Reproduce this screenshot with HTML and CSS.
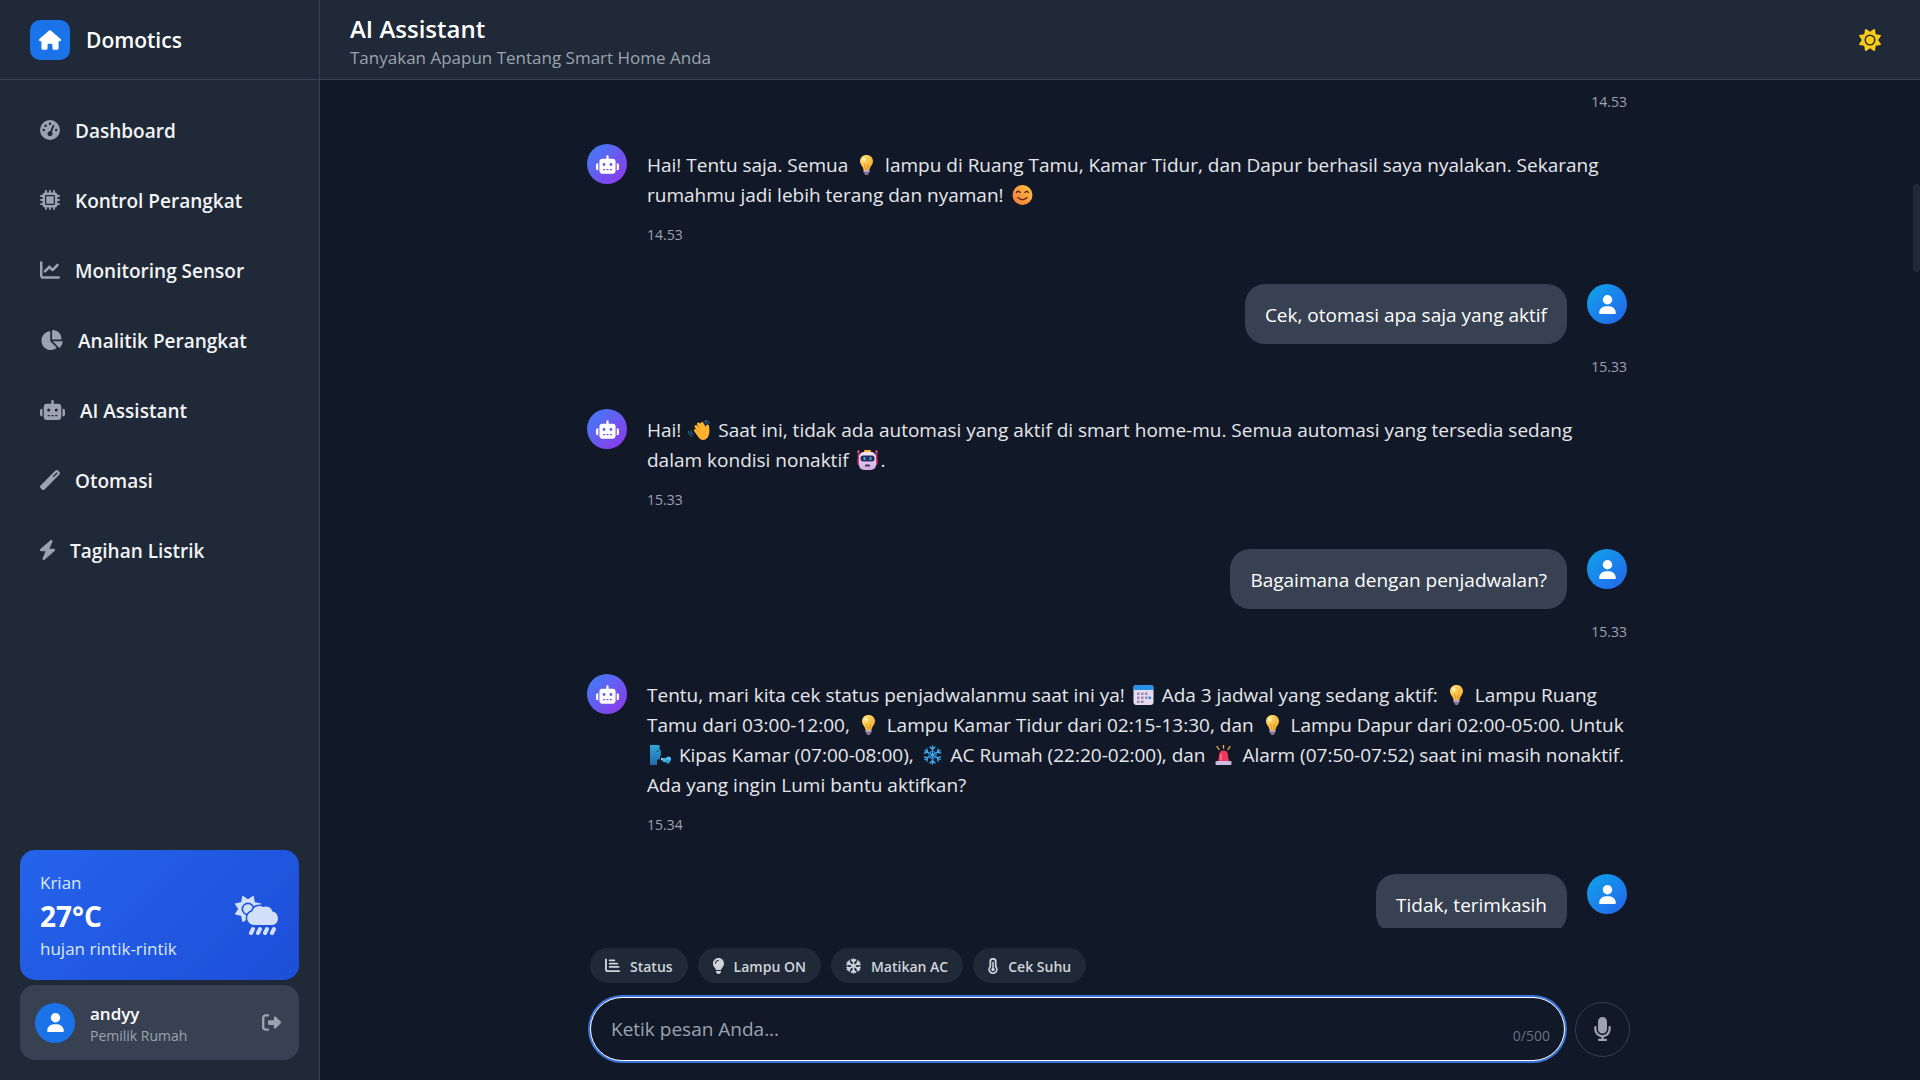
FILE: index.html
```html
<!DOCTYPE html>
<html lang="id">
<head>
  <meta charset="UTF-8">
  <meta name="viewport" content="width=device-width, initial-scale=1.0">
  <title>Domotics - AI Assistant</title>
  <link rel="stylesheet" href="styles.css">
</head>
<body>
  <!-- Icon sprite -->
  <svg class="sprite" aria-hidden="true">
    <defs>
      <linearGradient id="bulb-fill" x1="0" y1="0" x2="1" y2="1">
        <stop offset="0" stop-color="#ffe37a"/>
        <stop offset="1" stop-color="#f5a623"/>
      </linearGradient>
      <linearGradient id="face-fill" x1="1" y1="0" x2="0" y2="1">
        <stop offset="0" stop-color="#ffc83d"/>
        <stop offset="1" stop-color="#f5743e"/>
      </linearGradient>
      <linearGradient id="robot-fill" x1="0" y1="0" x2="0" y2="1">
        <stop offset="0" stop-color="#f3e6ff"/>
        <stop offset="1" stop-color="#cfa9e0"/>
      </linearGradient>
      <linearGradient id="wind-fill" x1="0" y1="0" x2="0" y2="1">
        <stop offset="0" stop-color="#2fa8dc"/>
        <stop offset="1" stop-color="#2566a8"/>
      </linearGradient>
      <mask id="sun-mask">
        <rect x="0" y="0" width="44" height="40" fill="#fff"/>
        <path d="M19 29a7 7 0 0 1-1.500-13.800A7 7 0 0 1 28 11a7 7 0 0 1 9.500 4.500A7 7 0 0 1 38 29z" fill="#000" stroke="#000" stroke-width="3"/>
        <rect x="11" y="24" width="33" height="16" fill="#000"/>
      </mask>
    </defs>
    <symbol id="i-user" viewBox="0 0 448 512"><path d="M224 256A128 128 0 1 0 224 0a128 128 0 1 0 0 256zm-45.700 48C79.800 304 0 383.800 0 482.300C0 498.700 13.300 512 29.700 512H418.300c16.400 0 29.700-13.300 29.700-29.700C448 383.800 368.200 304 269.700 304H178.300z"/></symbol>
    <symbol id="i-robot" viewBox="0 0 640 512"><path d="M320 0c17.700 0 32 14.300 32 32V96H472c39.800 0 72 32.200 72 72V440c0 39.800-32.200 72-72 72H168c-39.800 0-72-32.200-72-72V168c0-39.800 32.200-72 72-72H288V32c0-17.700 14.300-32 32-32zM208 384c-8.800 0-16 7.200-16 16s7.200 16 16 16h32c8.800 0 16-7.200 16-16s-7.200-16-16-16H208zm96 0c-8.800 0-16 7.200-16 16s7.200 16 16 16h32c8.800 0 16-7.200 16-16s-7.200-16-16-16H304zm96 0c-8.800 0-16 7.200-16 16s7.200 16 16 16h32c8.800 0 16-7.200 16-16s-7.200-16-16-16H400zM264 256a40 40 0 1 0 -80 0 40 40 0 1 0 80 0zm152 40a40 40 0 1 0 0-80 40 40 0 1 0 0 80zM48 224H64V416H48c-26.500 0-48-21.500-48-48V272c0-26.500 21.500-48 48-48zm544 0c26.500 0 48 21.500 48 48v96c0 26.500-21.500 48-48 48H576V224h16z"/></symbol>
    <symbol id="i-sun" viewBox="0 0 512 512"><path d="M361.500 1.200c5 2.100 8.600 6.600 9.600 11.900L391 121l107.900 19.800c5.300 1 9.800 4.600 11.900 9.600s1.500 10.700-1.600 15.200L446.900 256l62.300 90.300c3.100 4.500 3.700 10.200 1.600 15.200s-6.600 8.600-11.900 9.600L391 391 371.100 498.900c-1 5.300-4.600 9.800-9.600 11.900s-10.700 1.500-15.200-1.600L256 446.900l-90.300 62.300c-4.500 3.100-10.200 3.700-15.200 1.600s-8.600-6.600-9.600-11.900L121 391 13.100 371.100c-5.300-1-9.800-4.600-11.900-9.600s-1.500-10.700 1.600-15.200L65.100 256 2.800 165.700c-3.100-4.500-3.700-10.200-1.600-15.200s6.600-8.600 11.900-9.600L121 121 140.900 13.100c1-5.300 4.600-9.800 9.600-11.900s10.700-1.500 15.200 1.600L256 65.100 346.300 2.800c4.500-3.100 10.200-3.700 15.200-1.600zM160 256a96 96 0 1 1 192 0 96 96 0 1 1 -192 0zm224 0a128 128 0 1 0 -256 0 128 128 0 1 0 256 0z"/></symbol>

    <!-- Emoji -->
    <symbol id="e-bulb" viewBox="0 0 27 20">
      <path d="M13.500 0C9.700 0 7 2.700 7 6.300c0 2.700 1.700 4.200 2.700 6 .5.900.6 1.700.8 2.700h6c.2-1 .3-1.800.8-2.700 1-1.800 2.700-3.300 2.700-6C20 2.700 17.300 0 13.500 0z" fill="url(#bulb-fill)"/>
      <ellipse cx="11" cy="4.500" rx="1.500" ry="2.500" fill="#fff3b8"/>
      <path d="M12.500 14l-1-5M14.500 14l1-5" stroke="#d98a1c" stroke-width=".8"/>
      <path d="M10.500 15h6v2.500h-6z" fill="#b9a6c4"/>
      <path d="M11.500 17.500h4v1a2 1.500 0 0 1-4 0z" fill="#8d7a9c"/>
    </symbol>
    <symbol id="e-smile" viewBox="0 0 27 20">
      <circle cx="13.500" cy="10" r="10" fill="url(#face-fill)"/>
      <path d="M7.500 7.500q1.800-2.500 3.600 0M15.900 7.500q1.800-2.500 3.600 0M9 12.500q4.500 4.500 9 0" fill="none" stroke="#5b2b22" stroke-width="1.400" stroke-linecap="round"/>
    </symbol>
    <symbol id="e-wave" viewBox="0 0 27 20">
      <g stroke="#ffb82e" stroke-width="3" stroke-linecap="round">
        <path d="M16 13L10 6.500M17.500 10.500L12.500 4M20 10L16 3.500M12.500 14L9.500 10.500M21.500 11.500V6"/>
      </g>
      <path d="M11 12l9-4 3-1.500c.6 3 .8 6.500-.5 9.500-2 4.500-7 5-9.500 2L9.500 13z" fill="#ffb02e"/>
      <path d="M5 10.500q-.5 3 2.500 4M2.500 11q0 4 3.500 5.500M17.500 1.500q3 .2 4 3M19 0q3.500.8 4.500 3.500" fill="none" stroke="#2b7ea8" stroke-width="1"/>
    </symbol>
    <symbol id="e-robot" viewBox="0 0 27 20">
      <path d="M4.500 1v12M22.500 1v12" stroke="#d6336c" stroke-width="1.500"/>
      <circle cx="4.500" cy="1.500" r="1.200" fill="#f2548a"/><circle cx="22.500" cy="1.500" r="1.200" fill="#f2548a"/>
      <rect x="3.500" y="9" width="3" height="6" rx="1.200" fill="#e0306e"/><rect x="20.500" y="9" width="3" height="6" rx="1.200" fill="#e0306e"/>
      <rect x="10" y="0" width="7" height="4" rx="1" fill="#f5b82e"/>
      <rect x="5" y="2" width="17" height="18" rx="5" fill="url(#robot-fill)"/>
      <rect x="6.500" y="5.500" width="14" height="6" rx="2.500" fill="#2d2b57"/>
      <path d="M10.500 7v3M16.500 7v3" stroke="#37b6f2" stroke-width="1.800"/>
      <rect x="11" y="14.500" width="5" height="2" rx=".6" fill="#43364f"/>
    </symbol>
    <symbol id="e-calendar" viewBox="0 0 27 20">
      <rect x="3.500" y="0" width="20" height="20" rx="3" fill="#e6dcf2"/>
      <path d="M3.500 5V3a3 3 0 0 1 3-3h14a3 3 0 0 1 3 3v2z" fill="#2a8fe6"/>
      <g fill="#9a89b0">
        <path d="M7 7.500h2.500V10H7zM11 7.500h2.500V10H11zM15 7.500h2.500V10H15zM7 11.500h2.500V14H7zM11 11.500h2.500V14H11zM15 11.500h2.500V14H15zM7 15.500h2.500V18H7zM11 15.500h2.500V18H11z"/>
      </g>
      <path d="M18.500 11.500H21V14h-2.500z" fill="#2a8fe6"/>
    </symbol>
    <symbol id="e-wind" viewBox="0 0 27 20">
      <path d="M3 0h9.500v4l2 3-1 1 1 2-1.500 1v3l-3 1v5H3z" fill="url(#wind-fill)"/>
      <path d="M9.500 6.500q1.500-1 2.500 0" stroke="#0f4d80" fill="none"/>
      <circle cx="17.500" cy="15" r="2.200" fill="#3fb2e8"/><circle cx="21.500" cy="14" r="2.500" fill="#4fc3f0"/><circle cx="21" cy="16.500" r="2" fill="#2f9fd8"/>
      <path d="M14 12.500l3 1.500-3 1.500z" fill="#8fdcf7"/>
    </symbol>
    <symbol id="e-snow" viewBox="0 0 27 20">
      <g fill="none" stroke="#3fb0f0" stroke-width="1.300" stroke-linecap="round">
        <path d="M13.500 1v18M11 2l2.500 2.500L16 2M11 18l2.500-2.500L16 18"/>
        <path d="M13.500 1v18M11 2l2.500 2.500L16 2M11 18l2.500-2.500L16 18" transform="rotate(60 13.500 10)"/>
        <path d="M13.500 1v18M11 2l2.500 2.500L16 2M11 18l2.500-2.500L16 18" transform="rotate(120 13.500 10)"/>
      </g>
      <path d="M13.500 6l3.500 2v4l-3.500 2-3.500-2V8z" fill="none" stroke="#2b86d9" stroke-width="1.200"/>
    </symbol>
    <symbol id="e-alarm" viewBox="0 0 27 20">
      <path d="M13.500 0v3M7 1.500l2 3M20 1.500l-2 3" stroke="#f6b93b" stroke-width="1.300" stroke-linecap="round"/>
      <path d="M8 17l1.200-8a4.400 4.400 0 0 1 8.600 0l1.200 8z" fill="#f0385a"/>
      <path d="M11 9v6" stroke="#ff8aa0" stroke-width="1.200"/>
      <rect x="5.500" y="16" width="16" height="4" rx="1" fill="#cdbce0"/>
    </symbol>
  </svg>

  <div class="layout">
    <aside class="sidebar">
      <div class="brand">
        <span class="brand-logo">
          <svg width="22" height="20" viewBox="0 0 576 512"><path d="M575.800 255.500c0 18-15 32.100-32 32.100h-32l.7 160.200V472c0 22.100-17.900 40-40 40H392c-22.100 0-40-17.900-40-40V384c0-17.700-14.300-32-32-32H256c-17.700 0-32 14.300-32 32v88c0 22.100-17.900 40-40 40H104c-22.100 0-40-17.900-40-40V287.600H32c-18 0-32-14-32-32.100c0-9 3-17 10-24L266.400 8c7-7 15-8 22-8s15 2 21 7L564.800 231.500c8 7 12 15 11 24z"/></svg>
        </span>
        <span class="brand-name">Domotics</span>
      </div>

      <nav class="nav">
        <a href="#">
          <svg width="20" height="20" viewBox="0 0 512 512"><path d="M0 256a256 256 0 1 1 512 0A256 256 0 1 1 0 256zM288 96a32 32 0 1 0 -64 0 32 32 0 1 0 64 0zM256 416c35.300 0 64-28.700 64-64c0-17.400-6.900-33.100-18.100-44.600L366 161.700c5.300-12.100-.2-26.300-12.300-31.600s-26.300 .2-31.600 12.300L257.900 288c-.6 0-1.300 0-1.900 0c-35.300 0-64 28.700-64 64s28.700 64 64 64zM176 144a32 32 0 1 0 -64 0 32 32 0 1 0 64 0zM96 288a32 32 0 1 0 0-64 32 32 0 1 0 0 64zm352-32a32 32 0 1 0 -64 0 32 32 0 1 0 64 0z"/></svg>
          <span>Dashboard</span>
        </a>
        <a href="#">
          <svg width="20" height="20" viewBox="0 0 512 512"><path fill-rule="evenodd" d="M176 24c0-13.300-10.700-24-24-24s-24 10.700-24 24V64c-35.300 0-64 28.700-64 64H24c-13.300 0-24 10.700-24 24s10.700 24 24 24H64v56H24c-13.300 0-24 10.700-24 24s10.700 24 24 24H64v56H24c-13.300 0-24 10.700-24 24s10.700 24 24 24H64c0 35.300 28.700 64 64 64v40c0 13.300 10.700 24 24 24s24-10.700 24-24V448h56v40c0 13.300 10.700 24 24 24s24-10.700 24-24V448h56v40c0 13.300 10.700 24 24 24s24-10.700 24-24V448c35.300 0 64-28.700 64-64h40c13.300 0 24-10.700 24-24s-10.700-24-24-24H448V280h40c13.300 0 24-10.700 24-24s-10.700-24-24-24H448V176h40c13.300 0 24-10.700 24-24s-10.700-24-24-24H448c0-35.300-28.700-64-64-64V24c0-13.300-10.700-24-24-24s-24 10.700-24 24V64H280V24c0-13.300-10.700-24-24-24s-24 10.700-24 24V64H176V24zM160 128H352c17.700 0 32 14.300 32 32V352c0 17.700-14.300 32-32 32H160c-17.700 0-32-14.300-32-32V160c0-17.700 14.300-32 32-32zm192 32H160V352H352V160z"/></svg>
          <span>Kontrol Perangkat</span>
        </a>
        <a href="#">
          <svg width="20" height="20" viewBox="0 0 512 512"><path d="M64 64c0-17.700-14.300-32-32-32S0 46.300 0 64V400c0 44.200 35.800 80 80 80H480c17.700 0 32-14.300 32-32s-14.300-32-32-32H80c-8.800 0-16-7.200-16-16V64zm406.600 86.600c12.500-12.500 12.500-32.800 0-45.300s-32.800-12.500-45.300 0L320 210.700l-57.400-57.400c-12.500-12.500-32.800-12.500-45.300 0l-112 112c-12.500 12.500-12.500 32.800 0 45.300s32.800 12.500 45.300 0L240 221.300l57.400 57.400c12.500 12.500 32.800 12.500 45.300 0l128-128z"/></svg>
          <span>Monitoring Sensor</span>
        </a>
        <a href="#">
          <svg width="23" height="20" viewBox="0 0 576 512"><path d="M304 240V16.600c0-9 7-16.600 16-16.600C443.700 0 544 100.300 544 224c0 9-7.600 16-16.600 16H304zM32 272C32 150.700 122.100 50.300 239 34.300c9.200-1.300 17 6.100 17 15.400V288L412.500 444.500c6.700 6.700 6.200 17.700-1.500 23.100C371.800 495.600 323.800 512 272 512C139.500 512 32 404.600 32 272zm526.400 16c9.300 0 16.600 7.800 15.400 17c-7.700 55.900-34.600 105.600-73.900 142.300c-6 5.600-15.400 5.200-21.200-.7L320 288H558.400z"/></svg>
          <span>Analitik Perangkat</span>
        </a>
        <a href="#" aria-current="page">
          <svg width="25" height="20"><use href="#i-robot"/></svg>
          <span>AI Assistant</span>
        </a>
        <a href="#">
          <svg width="20" height="20" viewBox="0 0 512 512"><path d="M14.100 463.300c-18.700-18.700-18.700-49.100 0-67.900L395.400 14.100c18.700-18.700 49.100-18.700 67.900 0l34.600 34.600c18.700 18.700 18.700 49.100 0 67.900L116.500 497.900c-18.700 18.700-49.100 18.700-67.900 0L14.100 463.300zM347.600 187.600l105-105L429.400 59.300l-105 105 23.300 23.300z" fill-rule="evenodd"/></svg>
          <span>Otomasi</span>
        </a>
        <a href="#">
          <svg width="15" height="20" viewBox="32 0 384 512"><path d="M349.400 44.600c5.900-13.700 1.500-29.700-10.600-38.500s-28.600-8-39.900 1.800l-256 224c-10 8.800-13.600 22.900-8.900 35.300S50.700 288 64 288H175.500L98.600 467.400c-5.900 13.700-1.500 29.700 10.600 38.500s28.600 8 39.900-1.800l256-224c10-8.800 13.600-22.900 8.900-35.300s-16.600-20.700-30-20.700H272.500L349.400 44.600z"/></svg>
          <span>Tagihan Listrik</span>
        </a>
      </nav>

      <div class="sidebar-bottom">
        <div class="weather">
          <div>
            <div class="weather-text">Krian</div>
            <div class="weather-temp">27°C</div>
            <div class="weather-text">hujan rintik-rintik</div>
          </div>
          <svg class="weather-icon" width="44" height="40" viewBox="0 0 44 40">
            <g mask="url(#sun-mask)"><use href="#i-sun" width="26" height="26"/></g>
            <path d="M19 29a7 7 0 0 1-1.500-13.800A7 7 0 0 1 28 11a7 7 0 0 1 9.500 4.500A7 7 0 0 1 38 29z"/>
            <path d="M18 33l-2 4M25 33l-2 4M32 33l-2 4M39 33l-2 4" stroke="currentColor" stroke-width="4" stroke-linecap="round"/>
          </svg>
        </div>
        <div class="profile">
          <span class="avatar avatar-blue"><svg width="17" height="19"><use href="#i-user"/></svg></span>
          <div class="profile-info">
            <div class="profile-name">andyy</div>
            <div class="profile-role">Pemilik Rumah</div>
          </div>
          <button type="button" class="logout" aria-label="Keluar">
            <svg width="19" height="19" viewBox="0 0 512 512"><path d="M377.900 105.900L500.700 228.700c7.200 7.200 11.300 17.100 11.300 27.300s-4.100 20.100-11.300 27.300L377.900 406.100c-6.400 6.400-15 9.900-24 9.900c-18.700 0-33.900-15.200-33.900-33.900l0-62.100-128 0c-17.700 0-32-14.300-32-32l0-64c0-17.700 14.300-32 32-32l128 0 0-62.100c0-18.700 15.200-33.900 33.900-33.900c9 0 17.600 3.600 24 9.900zM160 96L96 96c-17.700 0-32 14.300-32 32l0 256c0 17.700 14.300 32 32 32l64 0c17.700 0 32 14.300 32 32s-14.300 32-32 32l-64 0c-53 0-96-43-96-96L0 128C0 75 43 32 96 32l64 0c17.700 0 32 14.300 32 32s-14.300 32-32 32z"/></svg>
          </button>
        </div>
      </div>
    </aside>

    <main class="main">
      <header class="topbar">
        <div class="topbar-title">
          <h1>AI Assistant</h1>
          <p>Tanyakan Apapun Tentang Smart Home Anda</p>
        </div>
        <button type="button" class="theme-toggle" aria-label="Ganti tema">
          <svg width="22" height="22"><use href="#i-sun"/></svg>
        </button>
      </header>

      <section class="chat">
        <div class="chat-inner">
          <div class="message user">
            <time>14.53</time>
          </div>

          <div class="message bot">
            <span class="avatar avatar-bot"><svg width="23" height="19"><use href="#i-robot"/></svg></span>
            <div class="message-body">
              <p>Hai! Tentu saja. Semua <svg class="emoji" role="img" aria-label="💡"><use href="#e-bulb"/></svg> lampu di Ruang Tamu, Kamar Tidur, dan Dapur berhasil saya nyalakan. Sekarang<br>rumahmu jadi lebih terang dan nyaman! <svg class="emoji" role="img" aria-label="😊"><use href="#e-smile"/></svg></p>
              <time>14.53</time>
            </div>
          </div>

          <div class="message user">
            <div class="message-row">
              <p class="bubble">Cek, otomasi apa saja yang aktif</p>
              <span class="avatar avatar-user"><svg width="17" height="19"><use href="#i-user"/></svg></span>
            </div>
            <time>15.33</time>
          </div>

          <div class="message bot">
            <span class="avatar avatar-bot"><svg width="23" height="19"><use href="#i-robot"/></svg></span>
            <div class="message-body">
              <p>Hai! <svg class="emoji" role="img" aria-label="👋"><use href="#e-wave"/></svg> Saat ini, tidak ada automasi yang aktif di smart home-mu. Semua automasi yang tersedia sedang<br>dalam kondisi nonaktif <svg class="emoji" role="img" aria-label="🤖"><use href="#e-robot"/></svg>.</p>
              <time>15.33</time>
            </div>
          </div>

          <div class="message user">
            <div class="message-row">
              <p class="bubble">Bagaimana dengan penjadwalan?</p>
              <span class="avatar avatar-user"><svg width="17" height="19"><use href="#i-user"/></svg></span>
            </div>
            <time>15.33</time>
          </div>

          <div class="message bot">
            <span class="avatar avatar-bot"><svg width="23" height="19"><use href="#i-robot"/></svg></span>
            <div class="message-body">
              <p>Tentu, mari kita cek status penjadwalanmu saat ini ya! <svg class="emoji" role="img" aria-label="📅"><use href="#e-calendar"/></svg> Ada 3 jadwal yang sedang aktif: <svg class="emoji" role="img" aria-label="💡"><use href="#e-bulb"/></svg> Lampu Ruang<br>Tamu dari 03:00-12:00, <svg class="emoji" role="img" aria-label="💡"><use href="#e-bulb"/></svg> Lampu Kamar Tidur dari 02:15-13:30, dan <svg class="emoji" role="img" aria-label="💡"><use href="#e-bulb"/></svg> Lampu Dapur dari 02:00-05:00. Untuk<br><svg class="emoji" role="img" aria-label="🌬️"><use href="#e-wind"/></svg> Kipas Kamar (07:00-08:00), <svg class="emoji" role="img" aria-label="❄️"><use href="#e-snow"/></svg> AC Rumah (22:20-02:00), dan <svg class="emoji" role="img" aria-label="🚨"><use href="#e-alarm"/></svg> Alarm (07:50-07:52) saat ini masih nonaktif.<br>Ada yang ingin Lumi bantu aktifkan?</p>
              <time>15.34</time>
            </div>
          </div>

          <div class="message user">
            <div class="message-row">
              <p class="bubble">Tidak, terimkasih</p>
              <span class="avatar avatar-user"><svg width="17" height="19"><use href="#i-user"/></svg></span>
            </div>
          </div>
        </div>
        <div class="scroll-thumb"></div>
      </section>

      <footer class="composer">
        <div class="composer-inner">
          <div class="chips">
            <button type="button" class="chip">
              <svg width="15" height="15" viewBox="0 0 16 16"><path d="M1 1.500V12a2 2 0 0 0 2 2h12M5 2.500h5M5 6h8M5 9.500h9.500" fill="none" stroke="currentColor" stroke-width="2" stroke-linecap="round"/></svg>
              <span>Status</span>
            </button>
            <button type="button" class="chip">
              <svg width="11" height="16" viewBox="16 0 352 512"><path d="M272 384c9.600-31.900 29.500-59.100 49.200-86.200c5.200-7.100 10.400-14.200 15.400-21.400c19.800-28.500 31.400-63 31.400-100.300C368 78.800 289.200 0 192 0S16 78.800 16 176c0 37.300 11.600 71.900 31.400 100.300c5 7.200 10.200 14.300 15.400 21.400c19.800 27.100 39.700 54.400 49.200 86.200H272zM192 512c44.200 0 80-35.800 80-80V416H112v16c0 44.200 35.800 80 80 80zM112 176c0 8.800-7.200 16-16 16s-16-7.200-16-16c0-61.900 50.100-112 112-112c8.800 0 16 7.200 16 16s-7.200 16-16 16c-44.200 0-80 35.800-80 80z"/></svg>
              <span>Lampu ON</span>
            </button>
            <button type="button" class="chip">
              <svg width="15" height="16" viewBox="0 0 15 16">
                <g fill="none" stroke="currentColor" stroke-width="1.700" stroke-linecap="round">
                  <path d="M7.500 1v14M5.500 1.800l2 2 2-2M5.500 14.200l2-2 2 2"/>
                  <path d="M7.500 1v14M5.500 1.800l2 2 2-2M5.500 14.200l2-2 2 2" transform="rotate(60 7.500 8)"/>
                  <path d="M7.500 1v14M5.500 1.800l2 2 2-2M5.500 14.200l2-2 2 2" transform="rotate(120 7.500 8)"/>
                </g>
              </svg>
              <span>Matikan AC</span>
            </button>
            <button type="button" class="chip">
              <svg width="10" height="16" viewBox="0 0 10 16"><path d="M2.300 3.500a2.700 2.700 0 0 1 5.400 0v5.200a3.800 3.800 0 1 1-5.400 0z" fill="none" stroke="currentColor" stroke-width="1.800"/><path d="M5 4.500v6" stroke="currentColor" stroke-width="1.500" stroke-linecap="round"/><circle cx="5" cy="11.500" r="1.700"/></svg>
              <span>Cek Suhu</span>
            </button>
          </div>
          <form class="input-row">
            <div class="input-wrap">
              <input type="text" placeholder="Ketik pesan Anda..." maxlength="500" aria-label="Ketik pesan Anda">
              <span class="counter">0/500</span>
            </div>
            <button type="button" class="mic" aria-label="Rekam suara">
              <svg width="17" height="24" viewBox="16 0 352 512"><path d="M192 0C139 0 96 43 96 96V256c0 53 43 96 96 96s96-43 96-96V96c0-53-43-96-96-96zM64 216c0-13.300-10.700-24-24-24s-24 10.700-24 24v40c0 89.100 66.200 162.700 152 174.400V464H120c-13.300 0-24 10.700-24 24s10.700 24 24 24h144c13.300 0 24-10.700 24-24s-10.700-24-24-24H216V430.400c85.800-11.700 152-85.300 152-174.400V216c0-13.300-10.700-24-24-24s-24 10.700-24 24v40c0 70.700-57.300 128-128 128s-128-57.300-128-128V216z"/></svg>
            </button>
          </form>
        </div>
      </footer>
    </main>
  </div>
</body>
</html>
```
FILE: styles.css
```css
* {
  box-sizing: border-box;
}

body {
  margin: 0;
  font-family: 'Open Sans', 'Noto Sans', sans-serif;
  font-size: 19px;
  line-height: 30px;
  color: #e5e7eb;
  background-color: #111827;
}

h1, p {
  margin: 0;
}

button, input {
  font-family: inherit;
}

button {
  padding: 0;
  border: none;
  background: none;
  cursor: pointer;
}

svg {
  fill: currentColor;
  flex-shrink: 0;
}

.sprite {
  position: absolute;
  width: 0;
  height: 0;
}

.layout {
  display: flex;
  height: 100vh;
}

/* Sidebar */
.sidebar {
  display: flex;
  flex-direction: column;
  flex: 0 0 320px;
  background-color: #1f2937;
  border-right: 1px solid #374151;
}

.brand {
  display: flex;
  align-items: center;
  gap: 16px;
  height: 80px;
  padding: 0 30px;
  border-bottom: 1px solid #374151;
}

.brand-logo {
  display: flex;
  align-items: center;
  justify-content: center;
  width: 40px;
  height: 40px;
  border-radius: 10px;
  background-color: #1a73e8;
  color: #fff;
}

.brand-name {
  font-size: 21px;
  font-weight: 600;
  color: #fff;
}

.nav {
  display: flex;
  flex-direction: column;
  gap: 10px;
  padding: 20px;
}

.nav a {
  display: flex;
  align-items: center;
  gap: 15px;
  height: 60px;
  padding: 0 20px;
  color: #f3f4f6;
  font-weight: 600;
  text-decoration: none;
}

.nav span {
  padding-top: 2px;
}

.nav svg {
  color: #9ca3af;
}

.sidebar-bottom {
  display: flex;
  flex-direction: column;
  gap: 5px;
  margin-top: auto;
  padding: 20px;
}

.weather {
  display: flex;
  align-items: center;
  justify-content: space-between;
  height: 130px;
  padding: 2px 20px 0;
  border-radius: 15px;
  background: linear-gradient(135deg, #2563eb, #1d4ed8);
  color: #fff;
}

.weather-text {
  font-size: 17px;
  color: #dbeafe;
}

.weather-temp {
  font-size: 28px;
  line-height: 36px;
  font-weight: 700;
}

.weather-icon {
  color: #d3e0fb;
}

.profile {
  display: flex;
  align-items: center;
  gap: 15px;
  height: 75px;
  padding: 0 18px 0 15px;
  border-radius: 15px;
  background-color: #374151;
}

.profile-info {
  flex: 1;
  padding-top: 2px;
}

.profile-name {
  font-size: 17px;
  line-height: 24px;
  font-weight: 600;
  color: #fff;
}

.profile-role {
  font-size: 14px;
  line-height: 20px;
  color: #9ca3af;
}

.logout {
  display: flex;
  color: #9ca3af;
}

/* Avatars */
.avatar {
  display: flex;
  align-items: center;
  justify-content: center;
  flex: 0 0 40px;
  height: 40px;
  border-radius: 50%;
  color: #fff;
}

.avatar-blue {
  background-color: #1a73e8;
}

.avatar-bot {
  background: linear-gradient(135deg, #3b82f6, #9333ea);
}

.avatar-user {
  background: linear-gradient(135deg, #0ea5e9, #2563eb);
}

/* Header */
.main {
  display: flex;
  flex-direction: column;
  flex: 1;
  min-width: 0;
}

.topbar {
  display: flex;
  align-items: center;
  justify-content: space-between;
  height: 80px;
  padding: 0 39px 0 30px;
  background-color: #1f2937;
  border-bottom: 1px solid #374151;
}

.topbar-title {
  padding-top: 4px;
}

.topbar h1 {
  font-size: 24px;
  line-height: 32px;
  font-weight: 600;
  color: #fff;
}

.topbar p {
  font-size: 17px;
  line-height: 26px;
  color: #9ca3af;
}

.theme-toggle {
  display: flex;
  color: #facc15;
}

/* Chat */
.chat {
  position: relative;
  flex: 1;
  min-height: 0;
  padding: 12px 26px 0 0;
  overflow: hidden;
}

.chat-inner {
  max-width: 1040px;
  margin: 0 auto;
}

.scroll-thumb {
  position: absolute;
  top: 104px;
  right: 0;
  width: 7px;
  height: 88px;
  border-radius: 4px;
  background-color: #1f2937;
}

.message {
  display: flex;
}

.message.bot {
  gap: 20px;
  margin-bottom: 39px;
}

.message.user {
  flex-direction: column;
  align-items: flex-end;
  gap: 13px;
  margin-bottom: 32px;
}

.message-body {
  display: flex;
  flex-direction: column;
  gap: 15px;
  padding-top: 6px;
}

.message-row {
  display: flex;
  gap: 20px;
}

.message-body p {
  white-space: nowrap;
}

.bubble {
  padding: 16px 20px 14px;
  border-radius: 20px;
  background-color: #374151;
  color: #fff;
}

.message time {
  font-size: 14px;
  line-height: 20px;
  color: #9ca3af;
}

.emoji {
  width: 27px;
  height: 20px;
  vertical-align: -3px;
}

/* Composer */
.composer {
  padding: 20px 20px 19px 0;
}

.composer-inner {
  max-width: 1040px;
  margin: 0 auto;
}

.chips {
  display: flex;
  gap: 10px;
  margin-bottom: 14px;
}

.chip {
  display: flex;
  align-items: center;
  gap: 10px;
  height: 35px;
  padding: 0 15px;
  border-radius: 18px;
  background-color: #1f2937;
  color: #d1d5db;
  font-size: 14px;
  font-weight: 600;
}

.chip span {
  padding-top: 2px;
}

.input-row {
  display: flex;
  align-items: center;
  gap: 10px;
}

.input-wrap {
  position: relative;
  flex: 1;
}

.input-wrap input {
  display: block;
  width: 100%;
  height: 64px;
  padding: 0 80px 0 20px;
  border: 1px solid #fff;
  border-radius: 32px;
  box-shadow: 0 0 0 2px #3b74d8;
  background-color: #111827;
  color: #e5e7eb;
  font-size: 19px;
  outline: none;
}

.input-wrap input::placeholder {
  color: #9ca3af;
}

.counter {
  position: absolute;
  right: 15px;
  bottom: 15px;
  font-size: 14px;
  line-height: 20px;
  color: #6b7280;
}

.mic {
  display: flex;
  align-items: center;
  justify-content: center;
  width: 55px;
  height: 55px;
  border: 1px solid #374151;
  border-radius: 50%;
  color: #9ca3af;
}
```
